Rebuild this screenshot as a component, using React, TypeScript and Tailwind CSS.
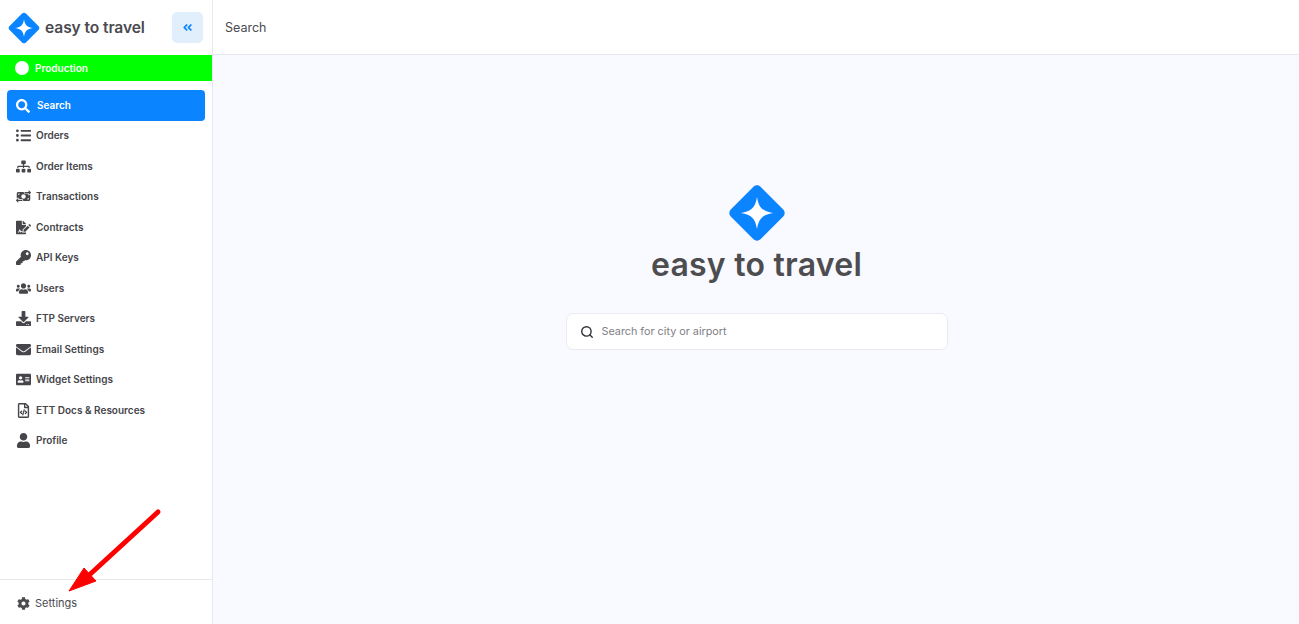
import { FaAddressCard, FaAngleDoubleLeft, FaCog, FaDownload, FaEnvelope, FaFileSignature, FaKey, FaListUl, FaRegFileCode, FaSearch, FaSitemap, FaUser, FaUsers } from 'react-icons/fa';
import { FaMoneyBillTransfer } from 'react-icons/fa6';
import { Search } from 'lucide-react';

const navItems = [
  { label: 'Orders', icon: FaListUl },
  { label: 'Order Items', icon: FaSitemap },
  { label: 'Transactions', icon: FaMoneyBillTransfer },
  { label: 'Contracts', icon: FaFileSignature },
  { label: 'API Keys', icon: FaKey },
  { label: 'Users', icon: FaUsers },
  { label: 'FTP Servers', icon: FaDownload },
  { label: 'Email Settings', icon: FaEnvelope },
  { label: 'Widget Settings', icon: FaAddressCard },
  { label: 'ETT Docs & Resources', icon: FaRegFileCode },
  { label: 'Profile', icon: FaUser },
];

function Logo({ className }: { className: string }) {
  return (
    <svg viewBox="0 0 56 56" className={className}>
      <rect x="9" y="9" width="38" height="38" rx="4.5" transform="rotate(45 28 28)" fill="#0a84ff" />
      <path d="M28 13.5C29.5 23 33 26.5 42.5 28C33 29.5 29.5 33 28 42.5C26.5 33 23 29.5 13.5 28C23 26.5 26.5 23 28 13.5Z" fill="#ffffff" />
    </svg>
  );
}

export default function App() {
  return (
    <div className="relative flex h-[624px] w-[1299px] overflow-hidden bg-white font-['Inter',sans-serif]">
      <aside className="flex w-[213px] shrink-0 flex-col border-r border-[#e8e9ee] bg-white">
        <div className="flex h-[55px] items-center pl-[7px] pr-[9px]">
          <Logo className="h-[34px] w-[34px]" />
          <span className="ml-[4px] text-[15.6px] font-semibold tracking-[-0.1px] text-[#4a4a4f]">easy to travel</span>
          <button className="ml-auto flex h-[31px] w-[31px] items-center justify-center rounded-[5px] bg-[#e1effd] text-[#0a84ff]">
            <FaAngleDoubleLeft className="h-[11px] w-[11px]" />
          </button>
        </div>
        <div className="flex h-[26px] items-center bg-[#00ff00] pl-[15px] text-[10px] font-semibold text-white">
          <span className="mr-[6px] h-[14px] w-[14px] rounded-full bg-white" />
          Production
        </div>
        <nav className="mt-[9px] flex flex-col px-[7px]">
          <a className="mb-[-0.5px] flex h-[31px] items-center rounded-[4px] bg-[#0a84ff] pl-[9px] text-[10px] font-semibold text-white">
            <FaSearch className="mr-[7px] h-[14px] w-[14px]" />
            Search
          </a>
          {navItems.map((item) => (
            <a key={item.label} className="flex h-[30.5px] items-center pl-[9px] text-[10px] font-semibold text-[#45454a]">
              <span className="mr-[6px] flex w-[14px] justify-center">
                <item.icon className="h-[15px] w-[15px] shrink-0" />
              </span>
              {item.label}
            </a>
          ))}
        </nav>
        <div className="mt-auto flex h-[45px] items-center border-t border-[#e8e9ee] pl-[17px] pt-[3px] text-[11px] text-[#4a4a4f]">
          <FaCog className="mr-[5px] h-[13px] w-[13px]" />
          Settings
        </div>
      </aside>

      <div className="flex min-w-0 flex-1 flex-col">
        <header className="flex h-[55px] shrink-0 items-center border-b border-[#e8e9ee] bg-white pl-[12px] pt-[2px] text-[12.5px] text-[#4a4a4f]">
          Search
        </header>
        <main className="flex flex-1 flex-col items-center bg-[#f9faff] pl-[1px] pt-[127px]">
          <Logo className="h-[62px] w-[62px]" />
          <div className="text-[32px] font-semibold leading-[42px] tracking-[0.25px] text-[#4d4d4f]">easy to travel</div>
          <div className="mt-[27px] flex h-[37px] w-[382px] items-center rounded-[7px] border border-[#e9ebf1] bg-white pl-[13px] pt-[1px] text-[10.8px] text-[#808085]">
            <Search className="mr-[8px] h-[14px] w-[14px] text-[#333338]" strokeWidth={2.4} />
            Search for city or airport
          </div>
        </main>
      </div>

      {/* annotation arrow drawn over the screenshot */}
      <svg className="absolute left-[60px] top-[500px] h-[100px] w-[110px]" viewBox="0 0 110 100">
        <path d="M98 12L26 78" stroke="#ff0000" strokeWidth="5" strokeLinecap="round" />
        <path d="M9 91L24 68L36 81Z" fill="#ff0000" stroke="#ff0000" strokeWidth="1" />
      </svg>
    </div>
  );
}
